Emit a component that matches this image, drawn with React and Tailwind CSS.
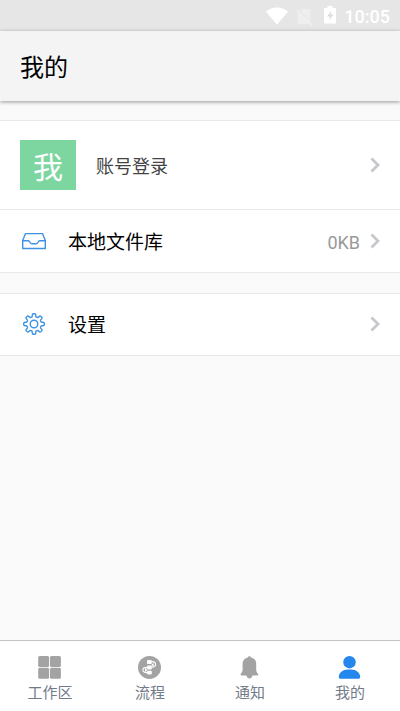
import React from "react";

function Chevron() {
  return (
    <svg className="h-4 w-2.5 shrink-0" viewBox="0 0 10 16" fill="none" stroke="#c7c7cc" strokeWidth="2.8" aria-hidden="true">
      <path d="M1.500 1.500 8 8 1.500 14.500" />
    </svg>
  );
}

function InboxIcon() {
  return (
    <svg className="h-6 w-7" viewBox="0 0 28 24" fill="none" stroke="#3f92e3" strokeWidth="1.4" strokeLinejoin="round" aria-hidden="true">
      <path d="M2.700 11.500 5.500 4.600h17l2.800 6.900v8H2.700z" />
      <path d="M2.700 11.700h5.600c1 0 1.200.5 1.400 1.200.4 1.300 1.200 1.900 2.300 1.900h4c1.100 0 1.900-.6 2.300-1.900.2-.7.400-1.200 1.400-1.200h5.600" />
    </svg>
  );
}

function gearOutline(teeth) {
  const points = [];
  const steps = 160;
  for (let i = 0; i < steps; i += 1) {
    const angle = (i / steps) * Math.PI * 2;
    const radius = 8.8 + 1.5 * Math.tanh(2.6 * Math.cos(angle * teeth));
    points.push(`${(14 + radius * Math.sin(angle)).toFixed(2)} ${(12 - radius * Math.cos(angle)).toFixed(2)}`);
  }
  return `M${points.join("L")}Z`;
}

function GearIcon() {
  return (
    <svg className="h-6 w-7" viewBox="0 0 28 24" fill="none" stroke="#3f92e3" strokeWidth="1.4" strokeLinejoin="round" aria-hidden="true">
      <path d={gearOutline(8)} />
      <circle cx="14" cy="12" r="3.8" />
    </svg>
  );
}

function GridIcon() {
  return (
    <svg className="size-6" viewBox="0 0 24 24" fill="#a3a3a3" aria-hidden="true">
      <rect x="0.200" y="1" width="10.900" height="10.900" rx="1.500" />
      <rect x="12" y="1" width="10.900" height="10.900" rx="1.500" />
      <rect x="0.200" y="12.800" width="10.900" height="10.900" rx="1.500" />
      <rect x="12" y="12.800" width="10.900" height="10.900" rx="1.500" />
    </svg>
  );
}

function FlowIcon() {
  return (
    <svg className="size-6" viewBox="0 0 24 24" aria-hidden="true">
      <circle cx="11.500" cy="12.400" r="11.500" fill="#a3a3a3" />
      <g fill="#fff">
        <rect x="9" y="5" width="4.800" height="4" rx="1" />
        <rect x="9" y="10.400" width="4.800" height="4" rx="1" />
        <rect x="9" y="15.800" width="4.800" height="3.600" rx="1" />
        <path d="m15.600 8-2.400 2 2.400 2zM7 12.700l2.400 2.200L7 17z" />
      </g>
      <path d="M13.500 6.600c5.500 0 5.500 5.600.2 5.600M9 12.400c-5.500.2-5.500 5 0 5.200" fill="none" stroke="#fff" strokeWidth="1.100" />
    </svg>
  );
}

function BellIcon() {
  return (
    <svg className="size-6" viewBox="0 0 24 24" fill="#a3a3a3" aria-hidden="true">
      <path d="M9.700 2.500a1.800 1.800 0 0 1 3.400 0c3.200.7 5.100 3.100 5.100 6.200v5.800c0 2 .6 2.900 1.600 4.100.7.900.3 1.900-.8 1.900H3.700c-1.100 0-1.500-1-.8-1.900 1-1.200 1.700-2.100 1.700-4.100V8.700c0-3.100 1.900-5.500 5.100-6.200Z" />
      <path d="M8.300 20h6.200c-.3 2.200-1.400 3.600-3.100 3.600S8.600 22.200 8.300 20Z" />
    </svg>
  );
}

function PersonIcon() {
  return (
    <svg className="size-6" viewBox="0 0 24 24" fill="#2387eb" aria-hidden="true">
      <circle cx="11.500" cy="7.200" r="6.200" />
      <path d="M.8 22c0-4.200 4.300-7.500 8.700-7.500h4c4.400 0 8.700 3.300 8.700 7.500 0 1.100-.6 1.700-1.600 1.700H2.400c-1 0-1.600-.6-1.600-1.700Z" />
    </svg>
  );
}

function StatusBar() {
  return (
    <div className="flex h-[31px] shrink-0 items-center justify-end bg-[#e6e6e6] pr-2.5 text-white">
      <svg className="h-5 w-6" viewBox="0 0 24 20" fill="currentColor" aria-hidden="true">
        <path d="M2 5.500C8.500.2 17.500.2 24 5.500L13 18.800z" />
      </svg>
      <svg className="ml-2 h-5 w-4" viewBox="0 0 16 20" aria-hidden="true">
        <path d="M6 3h8.500v15H2V7z" fill="#eee" />
        <path d="m1 3 15 15" stroke="#e6e6e6" strokeWidth="1.500" />
        <path d="m1 4.500 15 14.500" stroke="#f1f1f1" strokeWidth="1.300" />
      </svg>
      <svg className="ml-3 h-5 w-3" viewBox="0 0 12 20" aria-hidden="true">
        <path d="M3.500 0h5v2H12v15.500H0V2h3.500z" fill="currentColor" />
        <path d="M7.500 4.500 3 10.500h3L5 14.500l4.500-6h-3z" fill="#dcdcdc" />
      </svg>
      <time className="ml-2 pt-0.5 font-['Roboto',sans-serif] text-lg leading-6 font-medium">10:05</time>
    </div>
  );
}

function Row({ icon, title, value }) {
  return (
    <button type="button" className="flex w-full items-center px-5 text-left">
      {icon}
      <span className="ml-5 flex-1 text-[19px] leading-6 text-black">{title}</span>
      {value && <span className="mr-2.5 pt-1 font-['Roboto',sans-serif] text-lg leading-6 text-[#999]">{value}</span>}
      <Chevron />
    </button>
  );
}

const tabs = [
  { label: "工作区", Icon: GridIcon },
  { label: "流程", Icon: FlowIcon },
  { label: "通知", Icon: BellIcon },
  { label: "我的", Icon: PersonIcon },
];

export default function App() {
  return (
    <div className="flex min-h-screen flex-col bg-[#fafafa] font-['Noto_Sans_CJK_SC',sans-serif]">
      <StatusBar />
      <header className="flex h-[70px] shrink-0 items-center bg-[#f4f4f4] px-5 shadow-[0_1px_4px_rgba(0,0,0,0.4)]">
        <h1 className="text-2xl leading-8 font-normal text-black">我的</h1>
      </header>
      <main className="flex flex-1 flex-col gap-5 pt-[19px]">
        <section className="divide-y divide-[#e9e9e9] border-y border-[#e9e9e9] bg-white">
          <button type="button" className="flex h-[89px] w-full items-center px-5 text-left">
            <span className="flex h-[50px] w-14 items-center justify-center bg-[#7dd5a0] text-3xl leading-9 text-white">我</span>
            <span className="ml-5 flex-1 text-lg leading-6 text-[#444]">账号登录</span>
            <Chevron />
          </button>
          <div className="flex h-[62px]">
            <Row icon={<InboxIcon />} title="本地文件库" value="0KB" />
          </div>
        </section>
        <section className="border-y border-[#e9e9e9] bg-white">
          <div className="flex h-[61px] pb-px">
            <Row icon={<GearIcon />} title="设置" />
          </div>
        </section>
      </main>
      <nav className="grid h-[71px] shrink-0 grid-cols-4 border-t border-[#c4c4c4] bg-white">
        {tabs.map(({ label, Icon }) => (
          <button key={label} type="button" className="flex flex-col items-center pt-3.5 text-[15px] text-[#727b8a]">
            <Icon />
            <span className="mt-[3px] leading-5">{label}</span>
          </button>
        ))}
      </nav>
    </div>
  );
}
